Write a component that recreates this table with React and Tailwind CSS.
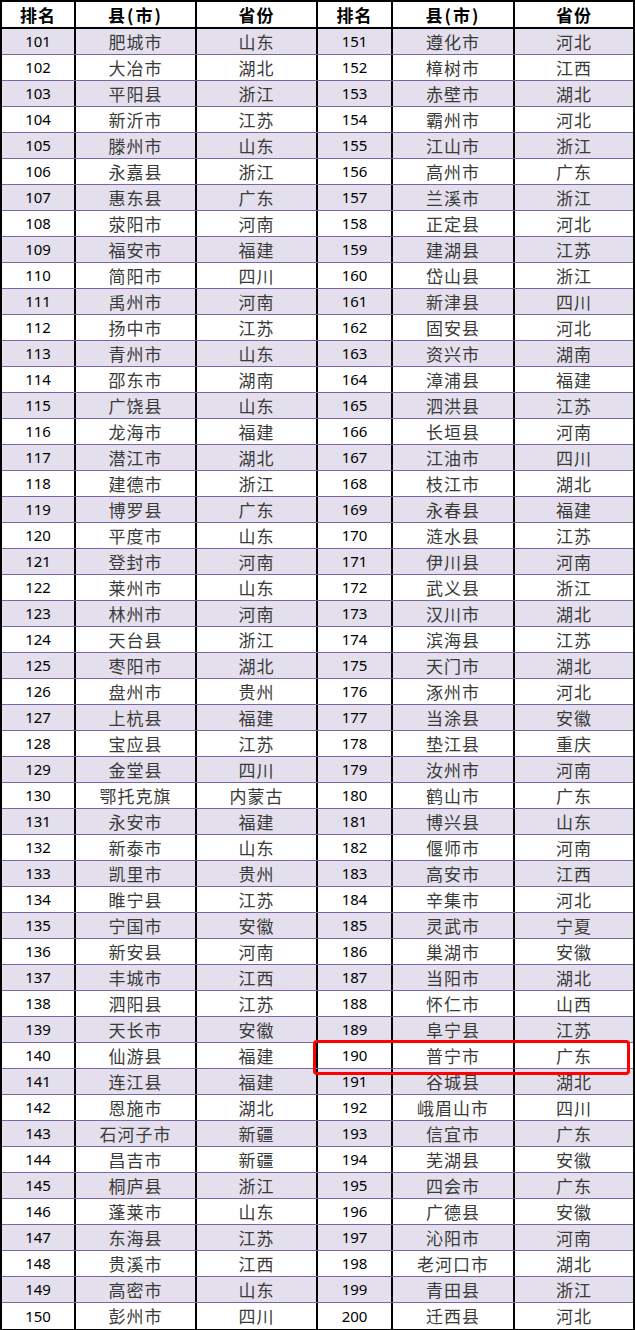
const left = [
  ["肥城市", "山东"], ["大冶市", "湖北"], ["平阳县", "浙江"], ["新沂市", "江苏"], ["滕州市", "山东"],
  ["永嘉县", "浙江"], ["惠东县", "广东"], ["荥阳市", "河南"], ["福安市", "福建"], ["简阳市", "四川"],
  ["禹州市", "河南"], ["扬中市", "江苏"], ["青州市", "山东"], ["邵东市", "湖南"], ["广饶县", "山东"],
  ["龙海市", "福建"], ["潜江市", "湖北"], ["建德市", "浙江"], ["博罗县", "广东"], ["平度市", "山东"],
  ["登封市", "河南"], ["莱州市", "山东"], ["林州市", "河南"], ["天台县", "浙江"], ["枣阳市", "湖北"],
  ["盘州市", "贵州"], ["上杭县", "福建"], ["宝应县", "江苏"], ["金堂县", "四川"], ["鄂托克旗", "内蒙古"],
  ["永安市", "福建"], ["新泰市", "山东"], ["凯里市", "贵州"], ["睢宁县", "江苏"], ["宁国市", "安徽"],
  ["新安县", "河南"], ["丰城市", "江西"], ["泗阳县", "江苏"], ["天长市", "安徽"], ["仙游县", "福建"],
  ["连江县", "福建"], ["恩施市", "湖北"], ["石河子市", "新疆"], ["昌吉市", "新疆"], ["桐庐县", "浙江"],
  ["蓬莱市", "山东"], ["东海县", "江苏"], ["贵溪市", "江西"], ["高密市", "山东"], ["彭州市", "四川"],
];

const right = [
  ["遵化市", "河北"], ["樟树市", "江西"], ["赤壁市", "湖北"], ["霸州市", "河北"], ["江山市", "浙江"],
  ["高州市", "广东"], ["兰溪市", "浙江"], ["正定县", "河北"], ["建湖县", "江苏"], ["岱山县", "浙江"],
  ["新津县", "四川"], ["固安县", "河北"], ["资兴市", "湖南"], ["漳浦县", "福建"], ["泗洪县", "江苏"],
  ["长垣县", "河南"], ["江油市", "四川"], ["枝江市", "湖北"], ["永春县", "福建"], ["涟水县", "江苏"],
  ["伊川县", "河南"], ["武义县", "浙江"], ["汉川市", "湖北"], ["滨海县", "江苏"], ["天门市", "湖北"],
  ["涿州市", "河北"], ["当涂县", "安徽"], ["垫江县", "重庆"], ["汝州市", "河南"], ["鹤山市", "广东"],
  ["博兴县", "山东"], ["偃师市", "河南"], ["高安市", "江西"], ["辛集市", "河北"], ["灵武市", "宁夏"],
  ["巢湖市", "安徽"], ["当阳市", "湖北"], ["怀仁市", "山西"], ["阜宁县", "江苏"], ["普宁市", "广东"],
  ["谷城县", "湖北"], ["峨眉山市", "四川"], ["信宜市", "广东"], ["芜湖县", "安徽"], ["四会市", "广东"],
  ["广德县", "安徽"], ["沁阳市", "河南"], ["老河口市", "湖北"], ["青田县", "浙江"], ["迁西县", "河北"],
];

const cjk = "font-['Noto_Sans_CJK_SC',sans-serif]";
const num = "font-['Noto_Sans','Noto_Sans_CJK_SC',sans-serif]";
const name = `text-[17px] tracking-[1px] text-[#3a3a3a] ${cjk}`;

const Cell = ({ className = "", children }) => (
  <div className={`flex h-full items-center justify-center ${className}`}>{children}</div>
);

const App = () => {
  return (
    <div className="relative w-[635px] border-2 border-black bg-white">
      <div className={`flex h-[27px] border-b-2 border-black text-[17px] font-bold text-black ${cjk}`}>
        <Cell className="w-[74px] border-r-2 border-black tracking-[1px]">排名</Cell>
        <Cell className="w-[121px] border-r-2 border-black tracking-[2px]">县(市)</Cell>
        <Cell className="w-[121px] border-r-2 border-black tracking-[1px]">省份</Cell>
        <Cell className="w-[75px] border-r-2 border-black tracking-[1px]">排名</Cell>
        <Cell className="w-[122px] border-r-2 border-black tracking-[2px]">县(市)</Cell>
        <Cell className="flex-1 tracking-[1px]">省份</Cell>
      </div>

      {left.map((row, i) => {
        const shaded = i % 2 === 0;
        const last = i === left.length - 1;
        return (
          <div
            key={i}
            className={`flex h-[26px] ${last ? "" : "border-b border-[#8064a2]"} ${
              shaded ? "bg-[#e4dfec]" : "bg-white"
            }`}
          >
            <Cell className={`w-[74px] border-r-2 border-black text-[15px] text-black ${num}`}>
              {101 + i}
            </Cell>
            <Cell className={`w-[121px] border-r-2 border-black ${name}`}>{row[0]}</Cell>
            <Cell className={`w-[121px] border-r-2 border-black ${name}`}>{row[1]}</Cell>
            <Cell className={`w-[75px] border-r-2 border-black text-[15px] text-black ${num}`}>
              {151 + i}
            </Cell>
            <Cell className={`w-[122px] border-r-2 border-black ${name}`}>{right[i][0]}</Cell>
            <Cell className={`flex-1 ${name}`}>{right[i][1]}</Cell>
          </div>
        );
      })}

      {/* highlight box on 190 */}
      <div className="pointer-events-none absolute left-[311px] top-[1038px] h-[35px] w-[317px] rounded-[4px] border-[3px] border-[#ff0000]" />
    </div>
  );
};

export default App;
